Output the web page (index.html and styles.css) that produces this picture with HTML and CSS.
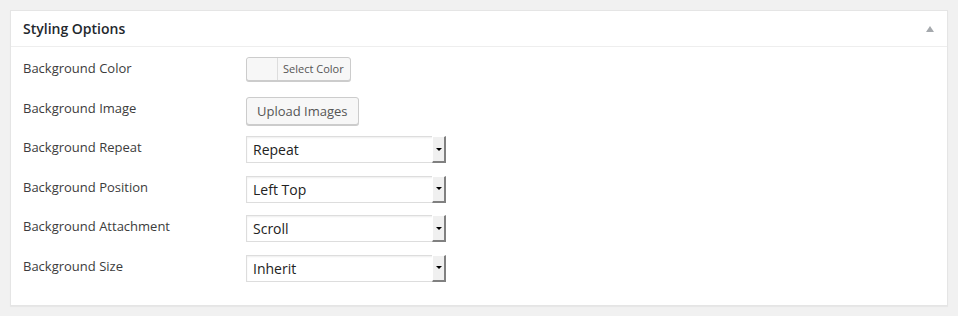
FILE: index.html
```html
<!DOCTYPE html>
<html>
<head>
<meta charset="utf-8">
<link rel="stylesheet" href="styles.css">
</head>
<body>
<div class="panel">
  <div class="panel-head">
    <h2 class="title">Styling Options</h2>
    <span class="toggle"></span>
  </div>
  <div class="panel-body">
    <div class="row">
      <div class="label">Background Color</div>
      <div class="color-btn"><span class="swatch"></span><span class="color-text">Select Color</span></div>
    </div>
    <div class="row">
      <div class="label">Background Image</div>
      <div class="button">Upload Images</div>
    </div>
    <div class="row">
      <div class="label">Background Repeat</div>
      <div class="select"><span class="select-text">Repeat</span><span class="arrow"></span></div>
    </div>
    <div class="row">
      <div class="label">Background Position</div>
      <div class="select"><span class="select-text">Left Top</span><span class="arrow"></span></div>
    </div>
    <div class="row">
      <div class="label">Background Attachment</div>
      <div class="select"><span class="select-text">Scroll</span><span class="arrow"></span></div>
    </div>
    <div class="row">
      <div class="label">Background Size</div>
      <div class="select"><span class="select-text">Inherit</span><span class="arrow"></span></div>
    </div>
  </div>
</div>
</body>
</html>
```
FILE: styles.css
```css
html, body {
  margin: 0;
  padding: 0;
  background: #f1f1f1;
  font-family: "Open Sans", "Liberation Sans", sans-serif;
  color: #444;
}
body {
  padding: 10px;
}
.panel {
  width: 938px;
  box-sizing: border-box;
  height: 296px;
  background: #fff;
  border: 1px solid #e5e5e5;
  box-shadow: 0 1px 1px rgba(0,0,0,.04);
}
.panel-head {
  height: 35px;
  border-bottom: 1px solid #eee;
  display: flex;
  align-items: center;
  justify-content: space-between;
  padding: 0 13px 0 12px;
}
.title {
  margin: 0;
  font-size: 14px;
  font-weight: 600;
  color: #23282d;
  line-height: 1;
}
.toggle {
  width: 0;
  height: 0;
  border-left: 4px solid transparent;
  border-right: 4px solid transparent;
  border-bottom: 6px solid #a5a9ad;
}
.panel-body {
  padding: 10px 12px 0 12px;
}
.row {
  display: flex;
  align-items: flex-start;
  height: 39.6px;
}
.label {
  width: 223px;
  font-size: 13px;
  line-height: 18px;
  margin-top: 2px;
  color: #3c3c3c;
}
.color-btn {
  display: flex;
  height: 24px;
  box-sizing: border-box;
  border: 1px solid #ccc;
  border-radius: 3px;
  background: #f7f7f7;
  box-shadow: 0 1px 0 #ccc;
}
.swatch {
  width: 30px;
  border-right: 1px solid #ddd;
  background: #f7f7f7;
  border-radius: 3px 0 0 3px;
}
.color-text {
  font-size: 11px;
  line-height: 22px;
  padding: 0 6px 0 5px;
  color: #555;
}
.button {
  height: 28px;
  box-sizing: border-box;
  border: 1px solid #ccc;
  border-radius: 3px;
  background: #f7f7f7;
  box-shadow: 0 1px 0 #ccc;
  font-size: 13px;
  line-height: 26px;
  padding: 0 10px;
  color: #555;
}
.select {
  width: 200px;
  height: 27px;
  box-sizing: border-box;
  border: 1px solid #ddd;
  box-shadow: inset 0 1px 2px rgba(0,0,0,.07);
  background: #fff;
  display: flex;
  justify-content: space-between;
  align-items: stretch;
}
.select-text {
  font-size: 14px;
  line-height: 25px;
  padding-left: 6px;
  color: #222;
}
.arrow {
  width: 14px;
  box-sizing: border-box;
  background: #f0f0f0;
  border-right: 2px solid #808080;
  border-bottom: 2px solid #808080;
  border-top: 1px solid #fff;
  border-left: 1px solid #fff;
  margin: -1px -1px -1px 0;
  display: flex;
  align-items: center;
  justify-content: center;
}
.arrow::after {
  content: "";
  width: 0;
  height: 0;
  border-left: 3px solid transparent;
  border-right: 3px solid transparent;
  border-top: 3px solid #000;
}
```
